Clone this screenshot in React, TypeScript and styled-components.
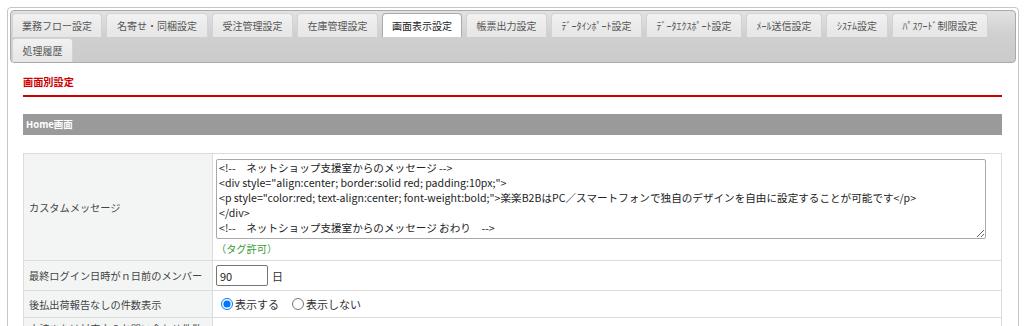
import { createGlobalStyle, styled } from "styled-components";

type TabItem = {
  label: string;
  width: number;
  active?: boolean;
};

const tabs: TabItem[] = [
  { label: "業務フロー設定", width: 90 },
  { label: "名寄せ・同梱設定", width: 102 },
  { label: "受注管理設定", width: 81 },
  { label: "在庫管理設定", width: 81 },
  { label: "画面表示設定", width: 80, active: true },
  { label: "帳票出力設定", width: 81 },
  { label: "ﾃﾞｰﾀｲﾝﾎﾟｰﾄ設定", width: 91 },
  { label: "ﾃﾞｰﾀｴｸｽﾎﾟｰﾄ設定", width: 96 },
  { label: "ﾒｰﾙ送信設定", width: 76 },
  { label: "ｼｽﾃﾑ設定", width: 62 },
  { label: "ﾊﾟｽﾜｰﾄﾞ制限設定", width: 96 },
  { label: "処理履歴", width: 61 },
];

const message = [
  "<!--　ネットショップ支援室からのメッセージ -->",
  '<div style="align:center; border:solid red; padding:10px;">',
  '<p style="color:red; text-align:center; font-weight:bold;">楽楽B2BはPC／スマートフォンで独自のデザインを自由に設定することが可能です</p>',
  "</div>",
  "<!--　ネットショップ支援室からのメッセージ おわり　-->",
].join("\n");

const App = () => {
  return (
    <>
      <GlobalStyle />
      <Page>
        <TabsFrame>
          <TabNav>
            {tabs.map((tab, idx) => (
              <Tab key={idx + "tab"} $width={tab.width} $active={!!tab.active}>
                {tab.label}
              </Tab>
            ))}
          </TabNav>
          <Panel>
            <SectionTitle>画面別設定</SectionTitle>
            <SubHeader>Home画面</SubHeader>
            <SettingTable>
              <tbody>
                <tr>
                  <LabelCell>カスタムメッセージ</LabelCell>
                  <ValueCell $pad="5px 4px 5px 3px">
                    <MessageArea defaultValue={message} spellCheck={false} />
                    <TagNote>（タグ許可）</TagNote>
                  </ValueCell>
                </tr>
                <tr>
                  <LabelCell>最終ログイン日時がｎ日前のメンバー</LabelCell>
                  <ValueCell $pad="4px 3px">
                    <DaysInput type="text" defaultValue="90" />
                    <Unit>日</Unit>
                  </ValueCell>
                </tr>
                <tr>
                  <LabelCell>後払出荷報告なしの件数表示</LabelCell>
                  <ValueCell $pad="3px 3px">
                    <RadioLabel>
                      <input type="radio" name="deferred" defaultChecked />
                      表示する
                    </RadioLabel>
                    <RadioLabel>
                      <input type="radio" name="deferred" />
                      表示しない
                    </RadioLabel>
                  </ValueCell>
                </tr>
                <tr>
                  <LabelCell>未読または対応中のお問い合わせ件数</LabelCell>
                  <ValueCell $pad="3px 3px" />
                </tr>
              </tbody>
            </SettingTable>
          </Panel>
        </TabsFrame>
      </Page>
    </>
  );
};

const GlobalStyle = createGlobalStyle`
  html, body {
    margin: 0;
    padding: 0;
    background: #fff;
    overflow: hidden;
  }
  body {
    font-family: "Noto Sans CJK JP", "Noto Sans", sans-serif;
    color: #333;
  }
`;

const Page = styled.div`
  padding: 7px 5px 0 7px;
`;

const TabsFrame = styled.div`
  border: 1px solid #c6c6c6;
  border-radius: 4px;
  padding: 2px;
  background: #fff;
`;

const TabNav = styled.div`
  display: flex;
  flex-wrap: wrap;
  column-gap: 4px;
  row-gap: 1px;
  padding: 2px 1px 0;
  border: 1px solid #aaa;
  border-radius: 4px;
  background: linear-gradient(to bottom, #e2e2e2 0%, #d0d0d0 45%, #cbcbcb 100%);
`;

const Tab = styled.div<{ $width: number; $active: boolean }>`
  box-sizing: border-box;
  width: ${(p) => p.$width}px;
  height: 24px;
  display: flex;
  align-items: center;
  justify-content: center;
  font-size: 10px;
  white-space: nowrap;
  border: 1px solid ${(p) => (p.$active ? "#aaa" : "#d3d3d3")};
  border-bottom: none;
  border-radius: 4px 4px 0 0;
  color: ${(p) => (p.$active ? "#222" : "#555")};
  background: ${(p) =>
    p.$active ? "#fff" : "linear-gradient(to bottom, #f2f2f2 0%, #ebebeb 50%, #e6e6e6 100%)"};
`;

const Panel = styled.div`
  padding: 12px 14px 20px 13px;
`;

const SectionTitle = styled.div`
  font-size: 10.2px;
  font-weight: bold;
  line-height: 14px;
  color: #cc0000;
  padding-bottom: 6px;
  border-bottom: 2px solid #cc0000;
`;

const SubHeader = styled.div`
  margin-top: 17px;
  height: 21px;
  line-height: 21px;
  padding-left: 3px;
  background: #9a9a9a;
  color: #fff;
  font-size: 9.5px;
  font-weight: bold;
`;

const SettingTable = styled.table`
  margin-top: 18px;
  width: 100%;
  border-collapse: collapse;
  border: 1px solid #dcdcdc;
  font-size: 10.2px;

  td {
    border: 1px solid #dcdcdc;
  }
`;

const LabelCell = styled.td`
  width: 178px;
  height: 20px;
  padding: 0 5px;
  background: #f3f4f4;
  color: #444;
  vertical-align: middle;
  white-space: nowrap;
`;

const ValueCell = styled.td<{ $pad: string }>`
  padding: ${(p) => p.$pad};
  background: #fff;
  vertical-align: middle;
`;

const MessageArea = styled.textarea`
  display: block;
  box-sizing: border-box;
  width: calc(100% - 11px);
  height: 80px;
  margin: 0;
  padding: 0 2px;
  border: 1px solid #a9a9a9;
  border-radius: 2px;
  font-family: "Noto Sans CJK JP", "Noto Sans", sans-serif;
  font-size: 10.6px;
  line-height: 15px;
  color: #222;
  white-space: pre;
  overflow: hidden;
`;

const TagNote = styled.div`
  margin-top: 3px;
  line-height: 13px;
  font-size: 10.2px;
  color: #3b9a3b;
`;

const DaysInput = styled.input`
  box-sizing: border-box;
  width: 52px;
  height: 21px;
  margin: 0;
  padding: 1px 3px;
  border: 1px solid #767676;
  border-radius: 2px;
  font-family: "Noto Sans CJK JP", "Noto Sans", sans-serif;
  font-size: 11px;
  color: #222;
  vertical-align: middle;
`;

const Unit = styled.span`
  margin-left: 4px;
  vertical-align: middle;
  font-size: 11px;
`;

const RadioLabel = styled.label`
  display: inline-flex;
  align-items: center;
  height: 20px;
  margin-right: 8px;
  font-size: 11px;
  color: #333;

  input {
    margin: 0 2px 0 5px;
    width: 12px;
    height: 12px;
  }
`;

export default App;
